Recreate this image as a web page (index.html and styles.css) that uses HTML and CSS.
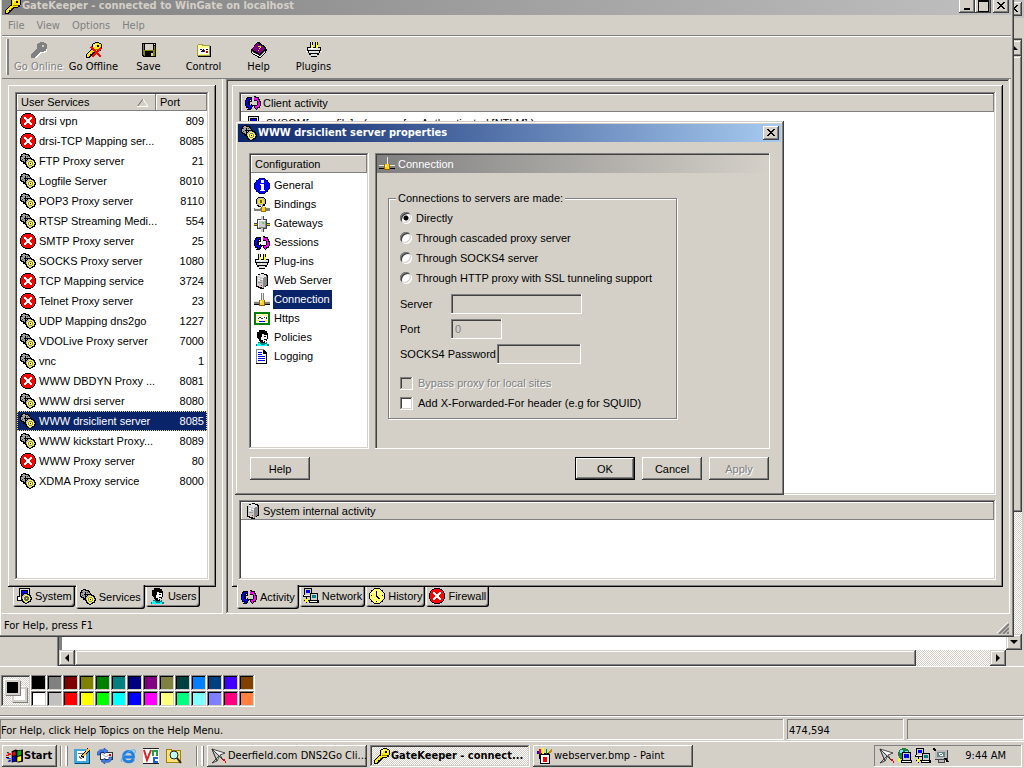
FILE: index.html
```html
<!DOCTYPE html>
<html lang="en">
<head>
  <meta charset="UTF-8" />
  <meta name="viewport" content="width=device-width, initial-scale=1.0" />
  <title>GateKeeper - connected to WinGate on localhost</title>
  <link rel="stylesheet" href="styles.css">
</head>
<body>
  <!-- icon set -->
  <svg class="defs" aria-hidden="true">
    <symbol id="stop" viewBox="0 0 16 16">
      <path fill="#000" d="M5 0h6v1h2v1h1v1h1v2h1v6h-1v2h-1v1h-1v1h-2v1H5v-1H3v-1H2v-1H1v-2H0V5h1V3h1V2h1V1h2z"/>
      <path fill="#f00" d="M5 1h6v1h2v1h1v2h1v6h-1v2h-1v1h-2v1H5v-1H3v-1H2v-2H1V5h1V3h1V2h2z"/>
      <path fill="#fff" d="M4 4h2v1h1v1h2V5h1V4h2v2h-1v1h-1v2h1v1h1v2h-2v-1H9v-1H7v1H6v1H4v-2h1V9h1V7H5V6H4z"/>
    </symbol>
    <symbol id="gears" viewBox="0 0 16 16">
      <path d="M3 0h3v1h3v1h1v2h1v5h-1v1H5v1H3V9H1V8H0V3h1V1h2z"/>
      <path fill="#a0a0a0" d="M3 1h2v1h3v1h1v1h1v4H6v1H4V8H2V7H1V4h1V2h1z"/>
      <path fill="#444" d="M2 3h1v1H2zM7 3h1v1H7zM2 6h1v1H2z"/>
      <path d="M5 3h1v5H5zM4 5h4v1H4z"/>
      <path d="M8 5h4v1h2v1h1v2h1v3h-1v2h-2v1h-2v1H9v-1H7v-1H6v-2H5V7h2V6h1z"/>
      <path fill="#b8b8b8" d="M8 6h3v1h2v1h1v2h1v1h-1v2h-2v1h-1v1H9v-1H8v-1H7v-2H6V8h1V7h1z"/>
      <path fill="#ff3" d="M9 7h3v1h1v1h1v3h-1v1h-1v1H9v-1H8v-1H7V9h1V8h1z"/>
      <path fill="#888" d="M9 8h3v1h1v3h-1v1H9v-1H8V9h1z"/>
      <path fill="#ff3" d="M9 9h3v3H9z"/><path d="M10 10h1v1h-1z"/>
    </symbol>
    <symbol id="keyshape" viewBox="0 0 16 16">
      <path d="M9 0h4v1h2v1h1v5h-1v2h-2v1H9v1H8v1H7v1H6v1H5v1H4v1H0v-4h1v-1h1v-1h1V9h1V8h1V7h1V2h1V1h2z"/>
    </symbol>
    <symbol id="key" viewBox="0 0 16 16">
      <use href="#keyshape" fill="#000"/>
      <path fill="#ffe800" d="M9 1h4v1h2v5h-2v2H8v1H7v1H6v1H5v1H4v1H3v1H1v-3h1v-1h1v-1h1V9h1V8h2V2h2z"/>
      <path fill="#000" d="M11 3h2v2h-2zM4 12h1v1H4z"/>
      <path fill="#a08000" d="M8 7h5v1H8zM6 10h1v1H6z"/>
      <path fill="#fff" d="M8 3h1v2H8zM9 2h2v1H9zM3 11h1v1H3z"/>
    </symbol>
    <symbol id="key-off" viewBox="0 0 16 16">
      <use href="#keyshape" fill="#fff" x="1" y="1"/>
      <use href="#keyshape" fill="#808080"/>
      <path fill="#d4d0c8" d="M11 3h2v2h-2z"/>
    </symbol>
    <symbol id="key-x" viewBox="0 0 16 16">
      <use href="#key"/>
      <path stroke="#f00" stroke-width="2" d="M5 5l10 10M15 6L6 15"/>
    </symbol>
    <symbol id="floppy" viewBox="0 0 16 16">
      <path fill="#000" d="M1 1h14v14H2v-1H1z"/>
      <path fill="#808000" d="M2 2h1v11H2zM13 4h1v10h-1zM3 8h10v1H3z"/>
      <path fill="#d4d0c8" d="M4 2h8v6H4zM13 2h1v1h-1zM10 11h2v3h-2z"/>
      <path fill="#808000" d="M3 9h1v5H3zM12 9h1v5h-1z"/>
    </symbol>
    <symbol id="control" viewBox="0 0 16 16">
      <path fill="#a0a040" d="M2 2h5v1h7v11H1V3h1z"/>
      <path fill="#ffff90" d="M2 3h4v1h7v9H2z"/>
      <path fill="#fff" d="M3 6h10v6H3z"/>
      <path fill="#000080" d="M4 7h2v1H4zM5 9h2v1H5zM7 7h1v3H7z"/>
      <path fill="#c00" d="M8 8h1v2H8zM10 9h2v2h-2z"/><path d="M10 7h2v1h-2zM6 8h1v1H6z"/>
      <path d="M14 4h1v11H2v-1h12z"/>
    </symbol>
    <symbol id="book" viewBox="0 0 16 16">
      <path d="M6 0h2l7 5v2l1 1-1 1v1l-5 6H8L0 11V8z"/>
      <path fill="#800080" d="M6 1l8 5-5 6L1 7z"/>
      <path fill="#808080" d="M1 9l8 5 5-6v1l-5 6-8-5z"/>
      <path fill="#fff" d="M1 10l8 4 5-5v1l-5 5-8-4z"/>
      <path fill="#ff0" d="M7 4h3v2H9v1H8V6h1V5H7zM7 8h1v1H7z"/>
    </symbol>
    <symbol id="plug" viewBox="0 0 16 16">
      <path d="M4 0h3v6H4zM9 0h3v6H9z"/>
      <path fill="#ff0" d="M5 0h1v6H5zM10 0h1v6h-1z"/>
      <path d="M1 5h14v4h-1v2h-1v2h-2v2H5v-2H3v-2H2V9H1z"/>
      <path fill="#e0e0e0" d="M2 6h12v2H2zM3 9h10v2H3zM5 12h6v2H5z"/>
      <path fill="#fff" d="M3 6h7v1H3zM0 9h2v1H0zM14 9h2v1h-2z"/>
      <path fill="#ff0" d="M5 3h2v3H5zM10 3h2v3h-2z"/>
    </symbol>
    <symbol id="sync" viewBox="0 0 16 16">
      <path d="M2 2h5v3H5v1h1V4h1v3H5v3h1V9h1v1h1v2H7v2H6v1H2v-1h1v-1H1v-2H0V5h1V3h1zM9 1h2v1h3v2h1v2h1v5h-1v2h-2v1h-1v1h-1v-1h-1v-1H9v-2H8v-1h4V6H9z"/>
      <path fill="#00f" d="M3 3h3v1H4v2H3v4h1v1h1v-1h1v1h1v1H6v1H5v1H3v-1h1v-1H2v-1H1V5h1V4h1z"/>
      <path fill="#f0f" d="M9 2h1v1h3v2h1v2h1v4h-1v1h-2v2h-1v-1h-1v-2h2v-1h1V6h-1V5H9z"/>
    </symbol>
    <symbol id="info" viewBox="0 0 16 16">
      <circle cx="8" cy="8" r="8" fill="#000080"/>
      <circle cx="8" cy="8" r="7" fill="#00f"/>
      <path fill="#fff" d="M7 2h3v3H7zM6 6h4v6h1v1H6v-1h1V7H6z"/>
    </symbol>
    <symbol id="server" viewBox="0 0 16 16">
      <path d="M7 0h3v1h3v1h1v11h-2v1h-2v2H6v-1H4v-1H2V3h2V1h3z"/>
      <path fill="#ccc" d="M3 3l6 2v10l-6-2z"/>
      <path fill="#e4e4e4" d="M7 1h2l4 2-4 2-6-2z"/>
      <path fill="#888" d="M9 5l4-2v9l-4 3z"/>
      <path fill="#fff" d="M4 5h2v1H4zM4 7h2v1H4zM7 6h2v1H7z"/><path fill="#999" d="M4 9h4v1H4zM6 7h2v1H6z"/><path fill="#f00" d="M7 12h1v1H7z"/>
    </symbol>
    <symbol id="pipe" viewBox="0 0 16 16">
      <path fill="#808080" d="M7 1h3v8H7zM0 9h16v3H0z"/>
      <path fill="#e8e8e8" d="M8 1h1v8H8zM0 9h6v1H0zM11 9h5v1h-5z"/>
      <path d="M0 12h5v1H0zM11 12h5v1h-5z"/>
      <path fill="#a06000" d="M5 8h6v6H5z"/><path fill="#ffd020" d="M6 8h4v5H6z"/><path fill="#ff8" d="M6 9h2v2H6z"/>
    </symbol>
    <symbol id="binding" viewBox="0 0 16 16">
      <path d="M4 0h6v1h1v1h1v5h-1v2H9v1H4V9H3V7H2V2h1V1h1z"/>
      <path fill="#bbb" d="M4 1h6v1h1v5h-2v2H5V8H3V2h1z"/>
      <path fill="#ffe800" d="M5 2h4v1h1v3H9v1H5V6H4V3h1z"/><path fill="#555" d="M6 3h2v3H6z"/>
      <path fill="#808080" d="M0 11h16v3H0zM7 8h2v4H7z"/><path fill="#eee" d="M1 11h5v1H1zM7 8h1v2H7z"/>
      <path fill="#b07000" d="M7 10h5v5H7z"/><path fill="#ffd020" d="M8 10h3v4H8z"/>
    </symbol>
    <symbol id="gateway" viewBox="0 0 16 16">
      <path fill="#444" d="M7 0h3v3h3v4h3v3h-3v3h-3v3H7v-3H3v-3H0V7h3V3h4z"/>
      <path fill="#ccc" d="M4 4h8v8H4zM7 0h2v4H7zM7 12h2v4H7z"/>
      <path fill="#fff" d="M4 4h7v1H4zM4 5h1v6H4z"/><path fill="#888" d="M11 5h1v7H5v-1h6z"/>
      <path fill="#e8c800" d="M0 8h3v1H0zM13 8h3v1h-3z"/><path fill="#6c6" d="M8 6h2v2H8z"/>
    </symbol>
    <symbol id="https" viewBox="0 0 16 16">
      <path fill="#008000" d="M0 1h16v13H0z"/><path fill="#fff" d="M2 3h12v9H2z"/>
      <path fill="#ff0" d="M3 4h2v1H3zM8 3h2v1H8zM11 4h2v1h-2zM3 9h2v1H3zM11 9h2v2h-2z"/>
      <path fill="#333" d="M4 7h1v1H4zM5 6h2v1H5zM7 7h2v1H7zM10 6h1v1h-1zM12 6h1v2h-1z"/><path fill="#00f" d="M5 10h6v1H5z"/>
    </symbol>
    <symbol id="face" viewBox="0 0 16 16">
      <path d="M5 0h6v1h2v2h1v6h-1v2h-2v2H6v-2H5V9H4V8H3V2h2z"/>
      <path fill="#f4f4f4" d="M8 4h2v1h3v4h-1v2h-2v1H9v-2H7V7h1z"/>
      <path d="M10 6h2v1h-2zM10 9h2v1h-2z"/>
      <path fill="#008080" d="M4 12h3v1h5v-1h1v2h2v2H2v-2h2z"/><path fill="#0ff" d="M4 13h2v1h1v1h4v-1h2v2H3v-2h1z"/>
    </symbol>
    <symbol id="doc" viewBox="0 0 16 16">
      <path d="M2 0h8v1h1v1h1v1h1v12H2z"/><path fill="#fff" d="M3 1h6v4h3v9H3z"/><path fill="#888" d="M2 0h8v1H3v13H2z"/>
      <path fill="#00f" d="M4 3h4v1H4zM4 5h4v1H4zM4 7h7v1H4zM4 9h7v1H4zM4 11h7v1H4z"/>
    </symbol>
    <symbol id="pc" viewBox="0 0 16 16">
      <path d="M3 0h11v9h1v4H1V8h2z"/><path fill="#ddd" d="M4 1h9v8H4z"/><path fill="#fff" d="M2 9h11v3H2z"/><path fill="#000" d="M5 2h7v6H5z"/><path fill="#00f" d="M6 3h5v4H6z"/>
    </symbol>
    <symbol id="system" viewBox="0 0 16 16">
      <use href="#pc"/>
      <path d="M8 5h4v1h2v1h1v2h1v3h-1v2h-2v1h-2v1H9v-1H7v-1H6v-2H5V7h2V6h1z"/>
      <path fill="#b8b8b8" d="M8 6h3v1h2v1h1v2h1v1h-1v2h-2v1h-1v1H9v-1H8v-1H7v-2H6V8h1V7h1z"/>
      <path fill="#ff3" d="M9 7h3v1h1v1h1v3h-1v1h-1v1H9v-1H8v-1H7V9h1V8h1z"/>
      <path fill="#666" d="M9 8h3v1h1v3h-1v1H9v-1H8V9h1z"/><path fill="#ff3" d="M10 10h1v1h-1z"/>
    </symbol>
    <symbol id="network" viewBox="0 0 16 16">
      <path d="M1 0h8v7h1v2H0V7h1z"/><path fill="#ccc" d="M2 1h6v6H2z"/><path fill="#00f" d="M3 2h4v3H3z"/><path fill="#fff" d="M1 7h7v1H1z"/>
      <path d="M7 5h8v7h1v3H6v-3h1z"/><path fill="#ccc" d="M8 6h6v6H8z"/><path fill="#008080" d="M9 7h4v3H9z"/><path fill="#fff" d="M7 13h7v1H7z"/>
      <path d="M3 9h1v6H3zM1 12h5v1H1z"/><path fill="#ff0" d="M2 11h3v3H2z"/>
    </symbol>
    <symbol id="clock" viewBox="0 0 16 16">
      <circle cx="8" cy="8" r="8"/><circle cx="8" cy="8" r="7" fill="#ff6"/>
      <path d="M7 3h1v5h1v1h1v1h1v1H9v-1H8V9H7zM2 7h1v1H2zM13 7h1v1h-1zM7 13h1v1H7z"/>
      <path fill="#fff" d="M4 4h2v1H4zM11 5h1v2h-1zM4 10h2v1H4z"/>
    </symbol>
    <symbol id="flag" viewBox="0 0 18 16">
      <path d="M6 3l4-2 3 1 5-1v13l-5 1-3-1-4 1zM1 4h2v1H1zM3 6h2v1H3zM0 9h3v1H0zM3 12h2v1H3z"/>
      <path fill="#f00" d="M7 4l3-1v4l-3 1zM2 5h3v2H2zM0 7h3v1H0z"/><path fill="#00b000" d="M12 3l4-1v5l-4 1z"/>
      <path fill="#00f" d="M7 9l3-1v5l-3 1zM1 10h4v1H1zM2 13h3v1H2z"/><path fill="#ff0" d="M12 9l4-1v5l-4 1z"/>
    </symbol>
    <symbol id="desktop" viewBox="0 0 16 16">
      <path fill="#40a8e0" d="M0 1h16v15H0z"/><path fill="#004870" d="M1 15h15v1H1zM15 2h1v14h-1z"/><path fill="#fff" d="M3 3h9v10H3z"/><path fill="none" stroke="#777" d="M5 8l2 3 3-3M4 5h5"/>
      <path stroke="#000" stroke-width="3" d="M8 9l7-8"/><path stroke="#ffc020" stroke-width="2" d="M9 8l6-7"/>
    </symbol>
    <symbol id="mail" viewBox="0 0 16 16">
      <path fill="#333" d="M3 4h13v8H3z"/><path fill="#fff" d="M4 5h11v6H4z"/><path fill="#f00" d="M12 6h2v2h-2z"/>
      <g shape-rendering="auto">
        <path fill="none" stroke="#aaa" d="M4 5l5 4 3-2"/>
        <path fill="#4080f0" stroke="#003080" stroke-width=".5" d="M0 7c0-5 4-6 7-5V0l4 3-4 3V4C4 3 3 4 3 7zM15 9c0 5-4 6-7 5v2l-4-3 4-3v2c3 1 4 0 4-3z"/>
      </g>
    </symbol>
    <symbol id="ie" viewBox="0 0 16 16">
      <g shape-rendering="auto" fill="none">
        <path stroke="#2080e0" stroke-width="3" d="M4 9h9.500c0-7.500-10-7.500-10 0 0 6 8 6 10 2"/>
        <path stroke="#50b0ff" d="M2 14C-2 11 11 0 15 2c1 1 0 3-1 4"/>
      </g>
    </symbol>
    <symbol id="vnc" viewBox="0 0 16 16">
      <path fill="#fff" d="M0 0h16v16H0z"/><path fill="#222" d="M0 0h16v1H0zM0 15h16v1H0z"/>
      <g shape-rendering="auto" fill="none" stroke-width="2">
        <path stroke="#e02020" d="M1 2l3 10 4-10"/><path stroke="#20a040" d="M10 8V3h4v5"/><path stroke="#2060e0" d="M15 10h-4v4h4"/>
      </g>
    </symbol>
    <symbol id="search" viewBox="0 0 16 16">
      <path fill="#a08000" d="M0 1h6v1h9v13H0z"/><path fill="#ffe070" d="M1 2h4v1h9v11H1z"/>
      <g shape-rendering="auto"><circle cx="8" cy="7" r="4" fill="#bff" stroke="#222"/><path stroke="#222" stroke-width="2" d="M11 10l4 5"/></g>
    </symbol>
    <symbol id="dart" viewBox="0 0 16 16">
      <g shape-rendering="auto" stroke="#222" stroke-width=".8">
        <path fill="#fff" d="M1 1l13 4-5 2-3 6z"/><path fill="#ccc" d="M1 1l11 11-3-5M1 1l5 12-5 2 7-7"/>
      </g>
      <path fill="#f00" d="M12 11h2v2h-2zM14 13h1v2h-1z"/>
    </symbol>
    <symbol id="paint" viewBox="0 0 16 16">
      <path d="M2 5h11v11H3z"/><path fill="#fff" d="M4 7h8v8H4z"/><path fill="#f00" d="M2 1h2v5H2zM6 9h4v5H6z"/><path fill="#ff0" d="M5 0h2v6H5z"/><path fill="#00f" d="M0 3h2v3H0z"/><path fill="#080" d="M9 1h1v5H9z"/><path fill="#c80" d="M11 4l4-3v2l-3 3z"/>
    </symbol>
    <symbol id="globe" viewBox="0 0 16 16">
      <circle cx="7" cy="6" r="6" fill="#208040"/><path fill="#80e0ff" d="M3 2h3v3H3zM8 3h3v2H8z"/>
      <path d="M5 4h9v8h1v3H4v-3h1z"/><path fill="#ccc" d="M6 5h7v7H6z"/><path fill="#00f" d="M7 6h5v4H7z"/><path fill="#fff" d="M5 13h9v1H5z"/><path fill="#ff0" d="M1 10h2v4H1z"/>
    </symbol>
    <symbol id="monitor" viewBox="0 0 16 16">
      <path fill="#444" d="M2 2h13v10h-3v3H5v-3H2z"/><path fill="#bbb" d="M2 2h12v9H2zM6 12h5v2H6z"/><path fill="#688" d="M4 4h8v5H4z"/>
      <path fill="none" stroke="#fff" d="M6 6l2-1 2 2-2 1z"/><path stroke="#000" stroke-width="2" d="M12 10l3 4M0 1l3 1"/>
    </symbol>
    <symbol id="close" viewBox="0 0 8 8"><path d="M0 0h2v1h1v1h2V1h1V0h2v1H7v1H6v1H5v1h1v1h1v1h1v1H6V6H5V5H3v1H2v1H0V6h1V5h1V4h1V3H2V2H1V1H0z"/></symbol>
  </svg>

  <!-- Paint, underneath -->
  <div class="paint">
    <div class="paint-back">
      <div class="back-title"><button class="caption-btn" aria-label="Close Paint"><svg><use href="#close"/></svg></button></div>
    </div>
    <div class="paint-work">
      <div class="toolbox"></div>
      <div class="view">
        <div class="canvas"></div>
        <div class="hscroll">
          <button class="arrow left" aria-label="Scroll left"></button>
          <div class="thumb"></div>
          <div class="track"></div>
          <button class="arrow right" aria-label="Scroll right"></button>
        </div>
      </div>
      <div class="vscroll">
        <button class="arrow up" aria-label="Scroll up"></button>
        <div class="thumb"></div>
        <div class="track"></div>
        <button class="arrow down" aria-label="Scroll down"></button>
      </div>
    </div>
    <div class="color-bar">
      <div class="current"><span class="back-color"></span><span class="fore-color"></span></div>
      <div class="palette" id="palette"></div>
    </div>
    <div class="paint-status">
      <span class="hint">For Help, click Help Topics on the Help Menu.</span>
      <span class="coords">474,594</span>
      <span class="coords"></span>
    </div>
  </div>

  <!-- GateKeeper -->
  <div class="window gatekeeper">
    <div class="titlebar inactive">
      <svg class="icon"><use href="#key"/></svg>
      <h1>GateKeeper - connected to WinGate on localhost</h1>
      <button class="caption-btn min" aria-label="Minimize"></button>
      <button class="caption-btn max" aria-label="Maximize"></button>
      <button class="caption-btn shut" aria-label="Close"><svg><use href="#close"/></svg></button>
    </div>
    <div class="menu">
      <button>File</button><button>View</button><button>Options</button><button>Help</button>
    </div>
    <div class="toolbar">
      <button disabled><svg class="icon"><use href="#key-off"/></svg>Go Online</button>
      <button><svg class="icon"><use href="#key-x"/></svg>Go Offline</button>
      <button><svg class="icon"><use href="#floppy"/></svg>Save</button>
      <button><svg class="icon"><use href="#control"/></svg>Control</button>
      <button><svg class="icon"><use href="#book"/></svg>Help</button>
      <button><svg class="icon"><use href="#plug"/></svg>Plugins</button>
    </div>
    <div class="panes">
      <div class="pane services">
        <div class="tabbox">
          <div class="listbox">
            <table>
              <thead><tr><th>User Services <svg class="sort" viewBox="0 0 12 8"><path stroke="#606060" d="M0 8l6-8"/><path stroke="#fff" fill="none" d="M6 0l5 7.500H0"/></svg></th><th>Port</th></tr></thead>
              <tbody>
                <tr><td><svg class="icon"><use href="#stop"/></svg>drsi vpn</td><td>809</td></tr>
                <tr><td><svg class="icon"><use href="#stop"/></svg>drsi-TCP Mapping ser...</td><td>8085</td></tr>
                <tr><td><svg class="icon"><use href="#gears"/></svg>FTP Proxy server</td><td>21</td></tr>
                <tr><td><svg class="icon"><use href="#gears"/></svg>Logfile Server</td><td>8010</td></tr>
                <tr><td><svg class="icon"><use href="#gears"/></svg>POP3 Proxy server</td><td>8110</td></tr>
                <tr><td><svg class="icon"><use href="#gears"/></svg>RTSP Streaming Medi...</td><td>554</td></tr>
                <tr><td><svg class="icon"><use href="#stop"/></svg>SMTP Proxy server</td><td>25</td></tr>
                <tr><td><svg class="icon"><use href="#gears"/></svg>SOCKS Proxy server</td><td>1080</td></tr>
                <tr><td><svg class="icon"><use href="#stop"/></svg>TCP Mapping service</td><td>3724</td></tr>
                <tr><td><svg class="icon"><use href="#stop"/></svg>Telnet Proxy server</td><td>23</td></tr>
                <tr><td><svg class="icon"><use href="#gears"/></svg>UDP Mapping dns2go</td><td>1227</td></tr>
                <tr><td><svg class="icon"><use href="#gears"/></svg>VDOLive Proxy server</td><td>7000</td></tr>
                <tr><td><svg class="icon"><use href="#gears"/></svg>vnc</td><td>1</td></tr>
                <tr><td><svg class="icon"><use href="#stop"/></svg>WWW DBDYN Proxy ...</td><td>8081</td></tr>
                <tr><td><svg class="icon"><use href="#gears"/></svg>WWW drsi server</td><td>8080</td></tr>
                <tr class="selected"><td><svg class="icon"><use href="#gears"/></svg>WWW drsiclient server</td><td>8085</td></tr>
                <tr><td><svg class="icon"><use href="#gears"/></svg>WWW kickstart Proxy...</td><td>8089</td></tr>
                <tr><td><svg class="icon"><use href="#stop"/></svg>WWW Proxy server</td><td>80</td></tr>
                <tr><td><svg class="icon"><use href="#gears"/></svg>XDMA Proxy service</td><td>8000</td></tr>
              </tbody>
            </table>
          </div>
        </div>
        <div class="tabs">
          <button><svg class="icon"><use href="#system"/></svg>System</button>
          <button class="active"><svg class="icon"><use href="#gears"/></svg>Services</button>
          <button><svg class="icon"><use href="#face"/></svg>Users</button>
        </div>
      </div>
      <div class="pane activity">
        <div class="tabbox">
          <div class="listbox client">
            <div class="list-head"><svg class="icon"><use href="#sync"/></svg>Client activity</div>
            <div class="list-row"><svg class="icon"><use href="#pc"/></svg>SYSOM[user_file] - (user safe - Authenticated [NTLM] )</div>
          </div>
          <div class="listbox internal">
            <div class="list-head"><svg class="icon"><use href="#server"/></svg>System internal activity</div>
          </div>
        </div>
        <div class="tabs">
          <button class="active"><svg class="icon"><use href="#sync"/></svg>Activity</button>
          <button><svg class="icon"><use href="#network"/></svg>Network</button>
          <button><svg class="icon"><use href="#clock"/></svg>History</button>
          <button><svg class="icon"><use href="#stop"/></svg>Firewall</button>
        </div>
      </div>
    </div>
    <div class="status">For Help, press F1
      <svg class="grip" viewBox="0 0 12 12"><path stroke="#fff" d="M0 11L11 0M4 11l7-7M8 11l3-3"/><path stroke="#808080" stroke-width="2" d="M2 12L12 2M6 12l6-6M10 12l2-2"/></svg>
    </div>
  </div>

  <!-- properties dialog -->
  <div class="window dialog">
    <div class="titlebar">
      <svg class="icon"><use href="#gears"/></svg>
      <h2>WWW drsiclient server properties</h2>
      <button class="caption-btn" aria-label="Close dialog"><svg><use href="#close"/></svg></button>
    </div>
    <form class="dialog-body">
      <div class="columns">
        <div class="listbox config">
          <div class="list-head">Configuration</div>
          <ul>
            <li><svg class="icon"><use href="#info"/></svg><span>General</span></li>
            <li><svg class="icon"><use href="#binding"/></svg><span>Bindings</span></li>
            <li><svg class="icon"><use href="#gateway"/></svg><span>Gateways</span></li>
            <li><svg class="icon"><use href="#sync"/></svg><span>Sessions</span></li>
            <li><svg class="icon"><use href="#plug"/></svg><span>Plug-ins</span></li>
            <li><svg class="icon"><use href="#server"/></svg><span>Web Server</span></li>
            <li class="selected"><svg class="icon"><use href="#pipe"/></svg><span>Connection</span></li>
            <li><svg class="icon"><use href="#https"/></svg><span>Https</span></li>
            <li><svg class="icon"><use href="#face"/></svg><span>Policies</span></li>
            <li><svg class="icon"><use href="#doc"/></svg><span>Logging</span></li>
          </ul>
        </div>
        <div class="page">
          <div class="page-head"><svg class="icon"><use href="#pipe"/></svg>Connection</div>
          <fieldset>
            <legend>Connections to servers are made:</legend>
            <label class="option"><input type="radio" name="via" checked>Directly</label>
            <label class="option"><input type="radio" name="via">Through cascaded proxy server</label>
            <label class="option"><input type="radio" name="via">Through SOCKS4 server</label>
            <label class="option"><input type="radio" name="via">Through HTTP proxy with SSL tunneling support</label>
            <div class="fields">
              <div class="field"><label for="server-name">Server</label><input type="text" id="server-name" class="server" disabled></div>
              <div class="field"><label for="port">Port</label><input type="text" id="port" class="port" value="0" disabled></div>
              <div class="field wide"><label for="password">SOCKS4 Password</label><input type="password" id="password" class="password" disabled></div>
            </div>
            <label class="option off"><input type="checkbox" disabled>Bypass proxy for local sites</label>
            <label class="option"><input type="checkbox">Add X-Forwarded-For header (e.g for SQUID)</label>
          </fieldset>
        </div>
      </div>
      <div class="buttons">
        <button type="button" class="btn help">Help</button>
        <button type="button" class="btn default">OK</button>
        <button type="button" class="btn">Cancel</button>
        <button type="button" class="btn" disabled>Apply</button>
      </div>
    </form>
  </div>

  <div class="taskbar">
    <button class="start"><svg class="flag"><use href="#flag"/></svg>Start</button>
    <div class="divider"></div>
    <div class="quick">
      <button aria-label="Show Desktop"><svg class="icon"><use href="#desktop"/></svg></button>
      <button aria-label="Outlook Express"><svg class="icon"><use href="#mail"/></svg></button>
      <button aria-label="Internet Explorer"><svg class="icon"><use href="#ie"/></svg></button>
      <button aria-label="VNC"><svg class="icon"><use href="#vnc"/></svg></button>
      <button aria-label="Search"><svg class="icon"><use href="#search"/></svg></button>
    </div>
    <div class="divider"></div>
    <div class="tasks">
      <button><svg class="icon"><use href="#dart"/></svg>Deerfield.com DNS2Go Cli...</button>
      <button class="active"><svg class="icon"><use href="#key"/></svg>GateKeeper - connect...</button>
      <button><svg class="icon"><use href="#paint"/></svg>webserver.bmp - Paint</button>
    </div>
    <div class="tray">
      <svg class="icon"><use href="#dart"/></svg>
      <svg class="icon"><use href="#globe"/></svg>
      <svg class="icon"><use href="#network"/></svg>
      <svg class="icon"><use href="#monitor"/></svg>
      <span class="time">9:44 AM</span>
    </div>
  </div>

  <script>
    const colors = [
      '#000000', '#808080', '#800000', '#808000', '#008000', '#008080', '#000080',
      '#800080', '#808040', '#004040', '#0080ff', '#004080', '#4000ff', '#804000',
      '#ffffff', '#c0c0c0', '#ff0000', '#ffff00', '#00ff00', '#00ffff', '#0000ff',
      '#ff00ff', '#ffff80', '#00ff80', '#80ffff', '#8080ff', '#ff0080', '#ff8040'
    ];
    const palette = document.getElementById('palette');
    colors.forEach(color => {
      const swatch = document.createElement('button');
      swatch.setAttribute('aria-label', color);
      swatch.style.backgroundColor = color;
      palette.appendChild(swatch);
    });
  </script>
</body>
</html>
```
FILE: styles.css
```css
:root {
  --face: #d4d0c8;
  --raised: inset -1px -1px #404040, inset 1px 1px #d4d0c8, inset -2px -2px #808080, inset 2px 2px #fff;
  --button: inset -1px -1px #404040, inset 1px 1px #fff, inset -2px -2px #808080;
  --sunken: inset -1px -1px #fff, inset 1px 1px #808080, inset -2px -2px #d4d0c8, inset 2px 2px #404040;
  --thin-sunken: inset -1px -1px #fff, inset 1px 1px #808080;
  --checker: repeating-conic-gradient(#fff 0 25%, #d4d0c8 0 50%) 0 0 / 2px 2px;
  --tahoma: Tahoma, "DejaVu Sans Condensed", sans-serif;
}
* {
  box-sizing: border-box;
}
body {
  margin: 0;
  height: 100vh;
  display: flex;
  flex-direction: column;
  position: relative;
  overflow: hidden;
  background: var(--face);
  color: #000;
  font: 11px/14px "Liberation Sans", Arial, sans-serif;
}
button, input {
  font: inherit;
  color: inherit;
  margin: 0;
  padding: 0;
  border: 0;
  border-radius: 0;
  background: var(--face);
}
h1, h2 {
  margin: 0;
  font: inherit;
}
.defs {
  position: absolute;
  width: 0;
  height: 0;
}
.icon {
  width: 16px;
  height: 16px;
  flex: none;
  shape-rendering: crispEdges;
}

/* Paint */
.paint {
  flex: 1;
  min-height: 0;
  display: flex;
  flex-direction: column;
}
.paint-back {
  height: 38px;
}
.back-title {
  display: flex;
  justify-content: flex-end;
  align-items: center;
  height: 18px;
  padding-right: 2px;
  background: #c0c0c0;
}
.paint-work {
  flex: 1;
  min-height: 0;
  display: flex;
  padding-right: 2px;
}
.toolbox {
  width: 58px;
  box-shadow: inset -1px 0 #808080;
}
.view {
  flex: 1;
  display: flex;
  flex-direction: column;
  border-left: 1px solid #404040;
}
.canvas {
  flex: 1;
  background: #fff;
  border-left: 3px solid #808080;
}
.hscroll {
  height: 16px;
  display: flex;
}
.vscroll {
  width: 16px;
  padding: 2px 0 16px;
  display: flex;
  flex-direction: column;
  box-shadow: inset 0 1px #808080, inset 0 2px #404040;
}
.thumb {
  flex: 840;
  background: var(--face);
  box-shadow: var(--raised);
}
.track {
  flex: 74;
  background: var(--checker);
}
.vscroll .thumb {
  flex: 457;
}
.vscroll .track {
  flex: 122;
}
.arrow {
  width: 16px;
  height: 16px;
  display: flex;
  align-items: center;
  justify-content: center;
  box-shadow: var(--raised);
}
.arrow::before {
  content: "";
  border: 4px solid transparent;
}
.arrow.left::before {
  border-left-width: 0;
  border-right-color: #000;
}
.arrow.right::before {
  border-right-width: 0;
  border-left-color: #000;
}
.arrow.up::before {
  border-top-width: 0;
  border-bottom-color: #000;
}
.arrow.down::before {
  border-bottom-width: 0;
  border-top-color: #000;
}
.color-bar {
  display: flex;
  height: 50px;
  padding: 8px 1px;
  border-top: 1px solid #fff;
  border-bottom: 1px solid #808080;
  box-shadow: 0 1px #fff;
}
.current {
  position: relative;
  width: 30px;
  height: 32px;
  background: var(--checker);
  box-shadow: var(--sunken);
}
.fore-color, .back-color {
  position: absolute;
  width: 15px;
  height: 15px;
  border: 2px solid var(--face);
  box-shadow: 1px 1px #808080, -1px -1px #fff;
}
.fore-color {
  left: 4px;
  top: 5px;
  background: #000;
}
.back-color {
  left: 11px;
  top: 12px;
  background: #fff;
}
.palette {
  display: grid;
  grid-template-columns: repeat(14, 16px);
  grid-auto-rows: 16px;
}
.palette button {
  box-shadow: inset -1px -1px #fff, inset 1px 1px #808080, inset -2px -2px #d4d0c8, inset 2px 2px #000;
}
.paint-status {
  display: flex;
  gap: 3px;
  height: 25px;
  padding: 3px 0 1px;
  font-family: var(--tahoma);
  line-height: 23px;
}
.paint-status span {
  padding-left: 2px;
  box-shadow: var(--thin-sunken);
}
.paint-status .hint {
  flex: 1;
  padding-left: 1px;
}
.coords {
  width: 117px;
}

/* windows */
.window {
  position: absolute;
  display: flex;
  flex-direction: column;
  padding: 3px;
  background: var(--face);
  box-shadow: var(--raised);
}
.titlebar {
  display: flex;
  align-items: center;
  height: 18px;
  padding: 0 2px 0 3px;
  background: linear-gradient(to right, #0a246a, #a6caf0);
  color: #fff;
  font: bold 11px/18px var(--tahoma);
}
.titlebar.inactive {
  background: linear-gradient(to right, #808080, #c0c0c0);
  color: #d4d0c8;
}
.titlebar h1, .titlebar h2 {
  flex: 1;
  padding-left: 1px;
}
.caption-btn {
  display: flex;
  align-items: center;
  justify-content: center;
  width: 16px;
  height: 14px;
  box-shadow: var(--button);
}
.caption-btn svg {
  width: 8px;
  height: 8px;
  shape-rendering: crispEdges;
}
.caption-btn.min::before {
  content: "";
  width: 6px;
  height: 2px;
  margin-top: 6px;
  background: #000;
}
.caption-btn.max::before {
  content: "";
  width: 9px;
  height: 9px;
  border: 1px solid #000;
  border-top-width: 2px;
}
.caption-btn.shut {
  margin-left: 2px;
}
.gatekeeper {
  top: -6px;
  left: -1px;
  right: 10px;
  bottom: 131px;
}
.menu {
  display: flex;
  height: 22px;
  border-bottom: 1px solid #fff;
  box-shadow: inset 0 -1px #808080;
  font-family: var(--tahoma);
  color: #808080;
}
.menu button {
  padding: 0 6px;
  background: none;
}
.toolbar {
  display: flex;
  height: 42px;
  padding: 2px 0 3px 4px;
  border-bottom: 1px solid #808080;
  font-family: var(--tahoma);
}
.toolbar::before {
  content: "";
  width: 2px;
  margin-right: 2px;
  background: #808080;
  border-left: 1px solid #fff;
}
.toolbar button {
  display: flex;
  flex-direction: column;
  align-items: center;
  gap: 2px;
  width: 55px;
  padding-top: 3px;
  background: none;
  white-space: nowrap;
}
.toolbar button:disabled, .btn:disabled, .option.off {
  color: #808080;
  text-shadow: 1px 1px #fff;
}
.panes {
  flex: 1;
  min-height: 0;
  display: flex;
  gap: 3px;
}
.pane {
  display: flex;
  flex-direction: column;
  padding: 6px 7px 5px 6px;
  box-shadow: var(--sunken);
}
.services {
  width: 221px;
  box-shadow: inset -1px -1px #fff;
}
.activity {
  flex: 1;
  margin-right: 1px;
}
.tabbox {
  flex: 1;
  min-height: 0;
  display: flex;
  flex-direction: column;
  gap: 5px;
  padding: 7px;
  box-shadow: inset -1px -1px #000, inset 1px 1px #fff, inset -2px -2px #808080;
}
.listbox {
  flex: 1;
  min-height: 0;
  padding: 2px;
  background: #fff;
  box-shadow: var(--sunken);
  overflow: hidden;
}
.listbox.internal {
  flex: 0 0 80px;
}
table {
  width: 100%;
  border-collapse: collapse;
  table-layout: fixed;
}
th {
  height: 17px;
  padding: 0 4px 2px;
  background: var(--face);
  box-shadow: inset -1px -1px #808080, inset 1px 1px #fff;
  text-align: left;
  font-weight: normal;
}
th:last-child {
  width: 51px;
}
.sort {
  float: right;
  width: 12px;
  height: 8px;
  margin: 4px 3px 0 0;
}
td {
  height: 20px;
  padding: 0 3px;
  line-height: 20px;
  white-space: nowrap;
}
td .icon {
  float: left;
  margin: 2px 3px 0 0;
}
td:last-child {
  text-align: right;
}
.selected {
  background: #0a246a;
  color: #fff;
}
tr.selected {
  outline: 1px dotted #f5db95;
  outline-offset: -1px;
}
.list-head {
  display: flex;
  align-items: center;
  height: 18px;
  padding-left: 4px;
  gap: 2px;
  background: var(--face);
  box-shadow: inset -1px -1px #808080, inset 1px 1px #fff;
}
.list-row {
  display: flex;
  align-items: flex-start;
  padding: 4px 0 0 4px;
  gap: 5px;
}
.tabs {
  display: flex;
  align-items: flex-start;
  gap: 1px;
  height: 22px;
  padding-left: 5px;
}
.tabs button {
  display: flex;
  align-items: center;
  gap: 3px;
  height: 20px;
  padding: 0 3px 2px;
  border-radius: 0 0 3px 3px;
  box-shadow: inset -1px -1px #000, inset 1px 0 #fff, inset -2px -2px #808080;
}
.tabs .active {
  position: relative;
  height: 24px;
  margin-top: -2px;
  padding: 0 4px;
}
.status {
  display: flex;
  justify-content: space-between;
  height: 20px;
  padding: 0 2px;
  font-family: var(--tahoma);
  line-height: 24px;
}
.grip {
  width: 12px;
  height: 12px;
  align-self: flex-end;
}

/* properties dialog */
.dialog {
  top: 121px;
  left: 235px;
  width: 549px;
}
.dialog-body {
  padding: 11px 11px 12px;
}
.columns {
  display: flex;
  gap: 6px;
}
.config {
  flex: 0 0 120px;
}
.config ul {
  margin: 0;
  padding: 3px 0 0 3px;
  list-style: none;
}
.config li {
  display: flex;
  align-items: center;
  gap: 3px;
  height: 19px;
}
.config li.selected {
  background: none;
}
.config span {
  padding: 0 2px 0 1px;
  line-height: 19px;
}
.config .selected span {
  background: #0a246a;
}
.page {
  flex: 1;
  padding: 2px 2px 30px;
  box-shadow: inset -1px -1px #fff, inset 1px 1px #808080, inset 2px 2px #404040;
}
.page-head {
  display: flex;
  align-items: center;
  height: 18px;
  padding-left: 2px;
  gap: 3px;
  background: linear-gradient(to right, #808080, #d4d0c8);
  color: #fff;
}
fieldset {
  width: 289px;
  margin: 19px 11px 0;
  padding: 4px 11px 5px;
  border: 1px solid #808080;
  box-shadow: 1px 1px #fff, inset 1px 1px #fff;
}
legend {
  margin-left: -4px;
  padding: 0 2px;
  background: var(--face);
  line-height: 12px;
}
.option {
  display: flex;
  align-items: center;
  height: 20px;
}
input[type="radio"], input[type="checkbox"] {
  appearance: none;
  width: 12px;
  height: 12px;
  margin-right: 4px;
  background: #fff;
  box-shadow: var(--sunken);
}
input[type="radio"] {
  border-radius: 50%;
}
input[type="radio"]:checked {
  background: radial-gradient(circle, #000 2px, #fff 3px);
}
input[type="checkbox"] {
  width: 13px;
  height: 13px;
  margin-right: 5px;
}
input:disabled, input[type="checkbox"]:disabled {
  background: var(--face);
  color: #808080;
}
.fields {
  display: grid;
  gap: 5px;
  padding: 6px 0 9px;
}
.field {
  display: flex;
  align-items: center;
}
.field label {
  width: 51px;
}
.field.wide label {
  width: 97px;
}
.field input {
  height: 20px;
  padding: 0 4px;
  box-shadow: inset -1px -1px #fff, inset 1px 1px #808080, inset 2px 2px #404040;
}
.server {
  width: 131px;
}
.port {
  width: 51px;
}
.password {
  width: 84px;
}
.buttons {
  display: flex;
  gap: 7px;
  padding: 8px 1px 0;
}
.btn {
  width: 60px;
  height: 23px;
  box-shadow: var(--button);
}
.btn.help {
  margin-right: auto;
}
.btn.default {
  border: 1px solid #000;
}

/* taskbar */
.taskbar {
  display: flex;
  align-items: center;
  height: 27px;
  padding: 2px 2px 1px;
  border-top: 1px solid #fff;
  background: var(--face);
  font-family: var(--tahoma);
}
.start {
  display: flex;
  align-items: center;
  gap: 1px;
  width: 55px;
  height: 22px;
  padding-left: 4px;
  font-weight: bold;
  box-shadow: var(--button);
}
.flag {
  width: 17px;
  height: 16px;
}
.divider {
  width: 8px;
  height: 20px;
  margin: 0 3px;
  border: solid #808080;
  border-width: 0 1px;
  box-shadow: inset 1px 0 #fff, inset -2px 0 #fff;
}
.quick {
  display: flex;
  gap: 7px;
  padding: 0 11px 0 3px;
}
.quick button, .quick .icon {
  display: block;
  width: 16px;
  height: 16px;
}
.tasks {
  flex: 1;
  display: flex;
  gap: 3px;
}
.tasks button {
  display: flex;
  align-items: center;
  gap: 1px;
  width: 160px;
  height: 22px;
  padding-left: 4px;
  white-space: nowrap;
  box-shadow: var(--button);
}
.tasks .active {
  background: var(--checker);
  font-weight: bold;
  box-shadow: var(--sunken);
}
.tray {
  display: flex;
  align-items: center;
  gap: 2px;
  width: 148px;
  height: 22px;
  padding: 0 16px 0 5px;
  box-shadow: var(--thin-sunken);
}
.time {
  margin-left: auto;
}
```
